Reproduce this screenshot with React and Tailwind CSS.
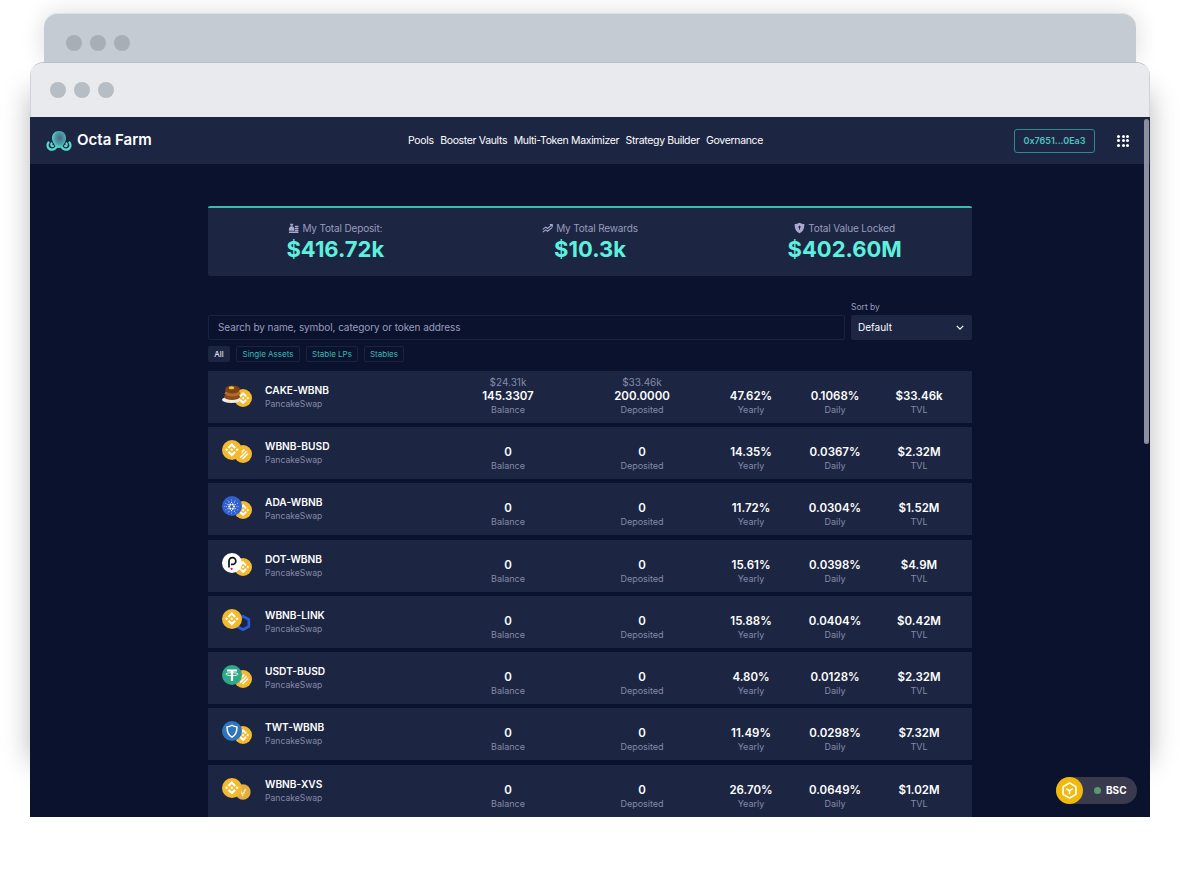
import { SiBinance, SiCardano } from 'react-icons/si';

const FONT = { fontFamily: '"Inter", "Liberation Sans", sans-serif' };

const POOLS = [
  { name: 'CAKE-WBNB', a: 'cake', b: 'bnb', balance: '145.3307', balanceUsd: '$24.31k', deposited: '200.0000', depositedUsd: '$33.46k', yearly: '47.62%', daily: '0.1068%', tvl: '$33.46k' },
  { name: 'WBNB-BUSD', a: 'bnb', b: 'busd', balance: '0', deposited: '0', yearly: '14.35%', daily: '0.0367%', tvl: '$2.32M' },
  { name: 'ADA-WBNB', a: 'ada', b: 'bnb', balance: '0', deposited: '0', yearly: '11.72%', daily: '0.0304%', tvl: '$1.52M' },
  { name: 'DOT-WBNB', a: 'dot', b: 'bnb', balance: '0', deposited: '0', yearly: '15.61%', daily: '0.0398%', tvl: '$4.9M' },
  { name: 'WBNB-LINK', a: 'bnb', b: 'link', balance: '0', deposited: '0', yearly: '15.88%', daily: '0.0404%', tvl: '$0.42M' },
  { name: 'USDT-BUSD', a: 'usdt', b: 'busd', balance: '0', deposited: '0', yearly: '4.80%', daily: '0.0128%', tvl: '$2.32M' },
  { name: 'TWT-WBNB', a: 'twt', b: 'bnb', balance: '0', deposited: '0', yearly: '11.49%', daily: '0.0298%', tvl: '$7.32M' },
  { name: 'WBNB-XVS', a: 'bnb', b: 'xvs', balance: '0', deposited: '0', yearly: '26.70%', daily: '0.0649%', tvl: '$1.02M' },
];

function Coin({ kind }) {
  if (kind === 'bnb') {
    return (
      <div className="w-full h-full rounded-full bg-[#f3ba2f] flex items-center justify-center text-white">
        <SiBinance className="w-[68%] h-[68%]" />
      </div>
    );
  }
  if (kind === 'busd') {
    return (
      <svg viewBox="0 0 20 20" className="w-full h-full">
        <circle cx="10" cy="10" r="10" fill="#f3ba2f" />
        <path d="M5 11.5 11.5 5M7 14 14 7M9.5 15.500 15.500 9.500" stroke="#fff" strokeWidth="1.700" />
      </svg>
    );
  }
  if (kind === 'ada') {
    return (
      <div className="w-full h-full rounded-full bg-[#2f5fd0] flex items-center justify-center text-white">
        <SiCardano className="w-[76%] h-[76%]" />
      </div>
    );
  }
  if (kind === 'dot') {
    return (
      <svg viewBox="0 0 20 20" className="w-full h-full">
        <circle cx="10" cy="10" r="10" fill="#fff" />
        <path d="M7 14.500V8a3.400 3.400 0 1 1 3.400 3.400H9" fill="none" stroke="#111" strokeWidth="1.700" />
        <circle cx="9.600" cy="15.800" r="1.100" fill="#e6007a" />
      </svg>
    );
  }
  if (kind === 'usdt') {
    return (
      <svg viewBox="0 0 20 20" className="w-full h-full">
        <circle cx="10" cy="10" r="10" fill="#2fa888" />
        <path d="M5 5.500h10M10 5.500V16" stroke="#fff" strokeWidth="2.200" />
        <ellipse cx="10" cy="9.200" rx="6" ry="1.500" fill="none" stroke="#fff" strokeWidth="0.900" />
      </svg>
    );
  }
  if (kind === 'twt') {
    return (
      <svg viewBox="0 0 20 20" className="w-full h-full">
        <circle cx="10" cy="10" r="10" fill="#2f75bd" />
        <path d="M10 4.200c1.700 1.200 3.300 1.600 5 1.700 0 5-1 8-5 10.200-4-2.200-5-5.200-5-10.200 1.700-.1 3.300-.5 5-1.700Z" fill="none" stroke="#fff" strokeWidth="1.400" />
      </svg>
    );
  }
  if (kind === 'link') {
    return (
      <svg viewBox="0 0 20 20" className="w-full h-full">
        <path d="M10 2.500 16.500 6.200v7.600L10 17.500 3.500 13.800V6.200Z" fill="none" stroke="#2a5ada" strokeWidth="3" />
      </svg>
    );
  }
  if (kind === 'xvs') {
    return (
      <svg viewBox="0 0 20 20" className="w-full h-full">
        <circle cx="10" cy="10" r="8.500" fill="#e3ad3f" />
        <path d="M7 7.500l2.500 6 3.500-7" fill="none" stroke="#f6e3b4" strokeWidth="1.800" />
      </svg>
    );
  }
  // cake: stack of pancakes on a plate
  return (
    <svg viewBox="0 0 20 20" className="w-full h-full">
      <ellipse cx="9.500" cy="15.800" rx="9.500" ry="3.200" fill="#f1ece4" />
      <ellipse cx="10" cy="12.800" rx="8" ry="3.200" fill="#8a4a1c" />
      <ellipse cx="10.500" cy="9.200" rx="7.800" ry="3.400" fill="#b56a2a" />
      <ellipse cx="10.500" cy="5.400" rx="7.400" ry="4" fill="#7d4317" />
      <ellipse cx="9.500" cy="3.800" rx="2.800" ry="1.500" fill="#f1c24a" />
    </svg>
  );
}

function Logo() {
  return (
    <svg viewBox="0 0 26 20" className="w-[26px] h-[20px]">
      <defs>
        <radialGradient id="head" cx="0.55" cy="0.42" r="0.6">
          <stop offset="0" stopColor="#4f6680" />
          <stop offset="0.55" stopColor="#4a9ba6" />
          <stop offset="1" stopColor="#57e0cf" />
        </radialGradient>
      </defs>
      <g fill="none" stroke="#55dcca" strokeWidth="2.200" strokeLinecap="round">
        <path d="M2.500 11.500C.4 14.500 2 18.600 6 18.600c3 0 4.500-2.500 5.500-4.600" />
        <path d="M23.500 11.500c2.100 3 .5 7.100-3.500 7.100-3 0-4.500-2.500-5.500-4.600" />
        <path d="M5.500 12.500c-.6 1.500 0 2.700 1.500 2.500" />
        <path d="M20.500 12.500c.6 1.500 0 2.700-1.500 2.500" />
      </g>
      <path d="M13 0c4.500 0 7 3.300 7 7 0 3.500-1.700 5-3 7.500-.8 1.500-2 2.500-4 2.500s-3.200-1-4-2.500C7.700 12 6 10.500 6 7c0-3.700 2.500-7 7-7Z" fill="url(#head)" />
    </svg>
  );
}

function GridIcon() {
  const dots = [0, 1, 2, 3, 4, 5, 6, 7, 8];
  return (
    <div className="grid grid-cols-3 gap-[1.500px] w-[12px] h-[12px]">
      {dots.map((d) => (
        <span key={d} className="w-[3px] h-[3px] rounded-full bg-white" />
      ))}
    </div>
  );
}

function DepositIcon() {
  return (
    <svg viewBox="0 0 12 12" className="w-[11px] h-[11px]" fill="#a9a9cf">
      <path d="M2 .8h4L5 3H3Z" />
      <path d="M2.800 3.500h2.400C7 5 7.200 6.500 7 8.500H1C.8 6.500 1 5 2.800 3.500Z" />
      <rect x="7.500" y="3" width="4" height="1.500" rx=".5" />
      <rect x="7.500" y="5.200" width="4" height="1.500" rx=".5" />
      <rect x="7.500" y="7.400" width="4" height="1.500" rx=".5" />
      <rect x="1" y="9.400" width="10.500" height="1.500" rx=".5" />
    </svg>
  );
}

function RewardsIcon() {
  return (
    <svg viewBox="0 0 12 12" className="w-[11px] h-[11px]" fill="none" stroke="#a9a9cf" strokeWidth="1.200">
      <path d="M.8 7 4 4.500 6 6 11 2M8.500 1.800H11.200V4.500" />
      <path d="M.8 10 4 7.500 6 9 11 5" />
    </svg>
  );
}

function ShieldIcon() {
  return (
    <svg viewBox="0 0 12 12" className="w-[11px] h-[12px]">
      <path d="M6 .3c1.800 1 3.500 1.300 5.300 1.300C11.300 6.500 10 9.800 6 11.800 2 9.800.7 6.500.7 1.600 2.500 1.600 4.200 1.300 6 .3Z" fill="#a9a9cf" />
      <circle cx="6" cy="4.800" r="1.200" fill="#1c2542" />
      <rect x="5.500" y="5" width="1" height="2.800" fill="#1c2542" />
    </svg>
  );
}

function Stat({ icon, label, value }) {
  return (
    <div className="flex flex-col items-center">
      <div className="flex items-center gap-[3px] text-[10px] leading-[12px] tracking-[-0.15px] text-[#9a9dbd]">
        {icon}
        <span>{label}</span>
      </div>
      <div className="mt-[1.500px] text-[22px] leading-[26px] font-bold text-[#5ef0de]">{value}</div>
    </div>
  );
}

function Cell({ top, value, label }) {
  return (
    <div className="flex flex-col items-center justify-end pb-[7px] h-full">
      {top && <div className="text-[10px] leading-[14px] text-[#868aa8]">{top}</div>}
      <div className="text-[11.500px] leading-[14px] font-semibold text-white">{value}</div>
      <div className="text-[9px] leading-[13px] text-[#868aa8]">{label}</div>
    </div>
  );
}

function PoolRow({ pool }) {
  return (
    <div className="grid grid-cols-[233px_134px_134px_84px_84px_84px] h-[52px] bg-[#1c2542]">
      <div className="flex items-start">
        <div className="relative w-[57px] h-full shrink-0">
          <div className="absolute left-[25px] top-[17px] w-[20px] h-[20px] rounded-full bg-[#1c2542] p-[1px]">
            <Coin kind={pool.b} />
          </div>
          <div className="absolute left-[14px] top-[13px] w-[20px] h-[20px]">
            <Coin kind={pool.a} />
          </div>
        </div>
        <div className="pt-[13px]">
          <div className="text-[10.200px] leading-[13px] font-semibold text-white">{pool.name}</div>
          <div className="text-[8.600px] leading-[14px] text-[#868aa8]">PancakeSwap</div>
        </div>
      </div>
      <Cell top={pool.balanceUsd} value={pool.balance} label="Balance" />
      <Cell top={pool.depositedUsd} value={pool.deposited} label="Deposited" />
      <Cell value={pool.yearly} label="Yearly" />
      <Cell value={pool.daily} label="Daily" />
      <Cell value={pool.tvl} label="TVL" />
    </div>
  );
}

export default function App() {
  return (
    <div style={FONT} className="w-[1180px] h-[871px] bg-white overflow-hidden pt-[13px]">
      <div className="relative ml-[44px] w-[1092px] h-[49px] rounded-t-[14px] bg-[#c5cbd2] border-t border-[#dfe2e5] shadow-[0_0_24px_rgba(0,0,0,0.14)] flex items-center gap-[8px] px-[22px] pt-[9px]">
        <span className="w-[16px] h-[16px] rounded-full bg-[#a7aeb6]" />
        <span className="w-[16px] h-[16px] rounded-full bg-[#a7aeb6]" />
        <span className="w-[16px] h-[16px] rounded-full bg-[#a7aeb6]" />
      </div>

      <div className="relative ml-[30px] w-[1120px] h-[755px]">
        {/* shadow stops short of the bottom edge, as in the mockup */}
        <div className="absolute inset-x-0 top-[30px] bottom-[55px] shadow-[0_0_26px_rgba(0,0,0,0.28)]" />

        <div className="relative h-full flex flex-col overflow-hidden rounded-t-[14px] border-t border-[#b9c0c7]">
          <div className="h-[54px] shrink-0 bg-[#e9eaee] border-x border-[#cfd3d8] flex items-center gap-[8px] px-[19px]">
            <span className="w-[16px] h-[16px] rounded-full bg-[#b7bdc4]" />
            <span className="w-[16px] h-[16px] rounded-full bg-[#b7bdc4]" />
            <span className="w-[16px] h-[16px] rounded-full bg-[#b7bdc4]" />
          </div>

          <nav className="h-[47px] shrink-0 bg-[#1c2542] flex items-center pl-[16px] pr-[21px]">
            <div className="flex items-center gap-[5px] w-[362px] shrink-0">
              <Logo />
              <span className="text-[15px] font-semibold text-white">Octa Farm</span>
            </div>
            <div className="flex items-center gap-[6.500px] text-[10.500px] tracking-[-0.34px] text-white">
              <span>Pools</span>
              <span>Booster Vaults</span>
              <span>Multi-Token Maximizer</span>
              <span>Strategy Builder</span>
              <span>Governance</span>
            </div>
            <div className="ml-auto flex items-center gap-[22px]">
              <div className="w-[81px] h-[24px] rounded-[3px] border border-[#2f8a90] flex items-center justify-center text-[9px] font-semibold text-[#4fc0c0]">
                0x7651...0Ea3
              </div>
              <GridIcon />
            </div>
          </nav>

          <main className="flex-1 bg-[#0a122e] flex flex-col items-center pt-[42px]">
            <div className="w-[764px]">
              <section className="h-[70px] rounded-[2px] bg-[#1c2542] border-t-2 border-[#3fb8b0] grid grid-cols-3 pt-[14px]">
                <Stat icon={<DepositIcon />} label="My Total Deposit:" value="$416.72k" />
                <Stat icon={<RewardsIcon />} label="My Total Rewards" value="$10.3k" />
                <Stat icon={<ShieldIcon />} label="Total Value Locked" value="$402.60M" />
              </section>

              <div className="flex items-end gap-[6px] mt-[25px]">
                <div className="flex-1 h-[25px] rounded-[2px] border border-[#1a2342] flex items-center px-[9px] text-[10px] tracking-[-0.08px] text-[#9a9dbd]">
                  Search by name, symbol, category or token address
                </div>
                <div className="w-[121px] shrink-0">
                  <div className="text-[8.500px] leading-[12px] mb-[2px] text-[#9a9dbd]">Sort by</div>
                  <div className="h-[25px] rounded-[2px] bg-[#1c2542] flex items-center justify-between pl-[7px] pr-[8px] text-[10px] text-white">
                    <span>Default</span>
                    <svg viewBox="0 0 10 6" className="w-[8px] h-[5px]" fill="none" stroke="#fff" strokeWidth="1.500">
                      <path d="M1 1l4 4 4-4" />
                    </svg>
                  </div>
                </div>
              </div>

              <div className="flex items-center gap-[6px] mt-[6px] text-[8px]">
                <span className="h-[16px] w-[22px] rounded-[2px] bg-[#1c2542] text-white flex items-center justify-center">All</span>
                <span className="h-[16px] w-[64px] rounded-[2px] border border-[#1a2342] text-[#3fb8b0] flex items-center justify-center">Single Assets</span>
                <span className="h-[16px] w-[52px] rounded-[2px] border border-[#1a2342] text-[#3fb8b0] flex items-center justify-center">Stable LPs</span>
                <span className="h-[16px] w-[40px] rounded-[2px] border border-[#1a2342] text-[#3fb8b0] flex items-center justify-center">Stables</span>
              </div>

              <div className="flex flex-col gap-[4.240px] mt-[9px]">
                {POOLS.map((pool) => (
                  <PoolRow key={pool.name} pool={pool} />
                ))}
              </div>
            </div>
          </main>

          {/* scrollbar thumb */}
          <div className="absolute right-[1px] top-[56px] w-[5px] h-[325px] rounded-full bg-[#8b8f9f]" />

          {/* network badge */}
          <div className="absolute right-[13px] bottom-[13px] w-[81px] h-[27px] rounded-full bg-[#3a3a4e] flex items-center">
            <div className="w-[27px] h-[27px] rounded-full bg-[#f0b90b] flex items-center justify-center">
              <svg viewBox="0 0 20 20" className="w-[19px] h-[19px]" fill="none" stroke="#fff" strokeWidth="1.700">
                <path d="M10 2 16.800 6v8L10 18 3.200 14V6Z" />
                <path d="M6.500 8 10 10.200 13.500 8M10 10.200V14" />
              </svg>
            </div>
            <span className="w-[7px] h-[7px] rounded-full bg-[#5a9a6a] ml-[11px]" />
            <span className="ml-[5px] text-[10px] font-bold text-white">BSC</span>
          </div>
        </div>
      </div>
    </div>
  );
}
